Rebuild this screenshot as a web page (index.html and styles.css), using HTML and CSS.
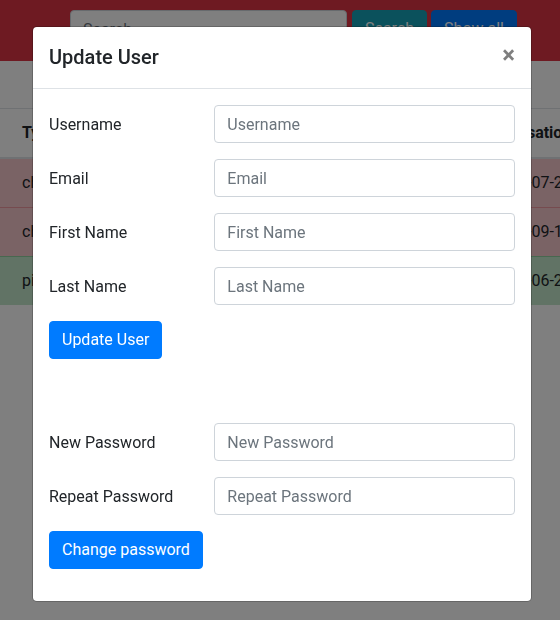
FILE: index.html
```html
<!DOCTYPE html>
<html lang="en">
<head>
<meta charset="utf-8">
<title>Update User</title>
<link rel="stylesheet" href="styles.css">
</head>
<body>
<div class="page">
  <nav class="topbar">
    <form class="search">
      <input class="search-input" type="text" placeholder="Search...">
      <button type="button" class="btn btn-info">Search</button>
      <button type="button" class="btn btn-primary">Show all</button>
    </form>
  </nav>
  <div class="table-wrap">
    <table class="table">
      <thead>
        <tr><th>Type</th><th>Name</th><th>Amount</th><th>Realisation</th></tr>
      </thead>
      <tbody>
        <tr class="row-danger"><td>charge</td><td>Electricity</td><td>-120.00</td><td>2019-07-24</td></tr>
        <tr class="row-danger"><td>charge</td><td>Internet</td><td>-45.00</td><td>2019-09-12</td></tr>
        <tr class="row-success"><td>pie</td><td>Salary</td><td>2400.00</td><td>2019-06-28</td></tr>
      </tbody>
    </table>
  </div>
</div>

<div class="backdrop"></div>

<div class="modal" role="dialog">
  <div class="modal-header">
    <h5 class="modal-title">Update User</h5>
    <button type="button" class="close" aria-label="Close">×</button>
  </div>
  <div class="modal-body">
    <form class="form form-user">
      <div class="form-row">
        <label class="form-label">Username</label>
        <input class="form-control" type="text" placeholder="Username">
      </div>
      <div class="form-row">
        <label class="form-label">Email</label>
        <input class="form-control" type="text" placeholder="Email">
      </div>
      <div class="form-row">
        <label class="form-label">First Name</label>
        <input class="form-control" type="text" placeholder="First Name">
      </div>
      <div class="form-row">
        <label class="form-label">Last Name</label>
        <input class="form-control" type="text" placeholder="Last Name">
      </div>
      <button type="button" class="btn btn-primary">Update User</button>
    </form>
    <div class="spacer"></div>
    <form class="form form-password">
      <div class="form-row">
        <label class="form-label">New Password</label>
        <input class="form-control" type="password" placeholder="New Password">
      </div>
      <div class="form-row">
        <label class="form-label">Repeat Password</label>
        <input class="form-control" type="password" placeholder="Repeat Password">
      </div>
      <button type="button" class="btn btn-primary">Change password</button>
    </form>
  </div>
</div>
</body>
</html>
```

FILE: styles.css
```css
* {
  box-sizing: border-box;
}

html, body {
  margin: 0;
  padding: 0;
}

body {
  font-family: Roboto, "Liberation Sans", Arial, sans-serif;
  font-size: 16px;
  line-height: 1.5;
  color: #212529;
  background: #fff;
  height: 620px;
  overflow: hidden;
}

/* ---------- page behind the modal ---------- */
.topbar {
  background: #dc3545;
  height: 61px;
  display: flex;
  justify-content: flex-end;
  align-items: flex-start;
  padding: 10px 43px 0 0;
}

.search {
  display: flex;
  gap: 4px;
  margin: 0;
}

.search-input {
  width: 277px;
  height: 38px;
  margin-right: 1px;
  padding: 6px 12px;
  font: inherit;
  color: #495057;
  background: #fff;
  border: 1px solid #ced4da;
  border-radius: 4px;
}

.search-input::placeholder {
  color: #6c757d;
}

.btn {
  display: inline-block;
  height: 38px;
  padding: 6px 12px;
  font-family: inherit;
  font-size: 16px;
  line-height: 24px;
  font-weight: 400;
  color: #fff;
  border: 1px solid transparent;
  border-radius: 4px;
  cursor: pointer;
  white-space: nowrap;
}

.btn-primary {
  background: #007bff;
  border-color: #007bff;
}

.btn-info {
  background: #17a2b8;
  border-color: #17a2b8;
}

.table-wrap {
  padding-top: 47px;
  overflow: hidden;
}

.table {
  border-collapse: collapse;
  table-layout: fixed;
  width: 720px;
}

.table th,
.table td {
  padding: 12px;
  border-top: 1px solid #dee2e6;
  text-align: left;
  vertical-align: top;
  white-space: nowrap;
  overflow: hidden;
}

.table th:first-child,
.table td:first-child {
  padding-left: 22px;
}

.table th {
  font-weight: 700;
  border-bottom: 2px solid #dee2e6;
}

.table th:nth-child(1) { width: 170px; }
.table th:nth-child(2) { width: 160px; }
.table th:nth-child(3) { width: 149px; }
.table th:nth-child(4) { width: 241px; }

.row-danger td {
  background: #f5c6cb;
  border-top-color: #ed969e;
}

.row-success td {
  background: #c3e6cb;
  border-top-color: #8fd19e;
}

/* ---------- modal ---------- */
.backdrop {
  position: fixed;
  inset: 0;
  background: rgba(0, 0, 0, 0.5);
}

.modal {
  position: fixed;
  left: 32px;
  top: 26px;
  width: 500px;
  background: #fff;
  background-clip: padding-box;
  border: 1px solid rgba(0, 0, 0, 0.2);
  border-radius: 4.8px;
}

.modal-header {
  display: flex;
  align-items: flex-start;
  justify-content: space-between;
  padding: 16px;
  border-bottom: 1px solid #dee2e6;
}

.modal-title {
  margin: 0;
  font-size: 20px;
  font-weight: 500;
  line-height: 29px;
}

.close {
  margin: -16px -16px -16px auto;
  padding: 16px;
  background: transparent;
  border: 0;
  font-family: inherit;
  font-size: 24px;
  font-weight: 700;
  line-height: 1;
  color: #000;
  opacity: 0.5;
  text-shadow: 0 1px 0 #fff;
  cursor: pointer;
}

.modal-body {
  padding: 16px;
}

.form {
  margin: 0 0 16px;
}

.form-row {
  display: grid;
  grid-template-columns: calc((100% + 30px) / 3 - 30px) 1fr;
  column-gap: 30px;
  margin-bottom: 16px;
}

.form-label {
  padding: 8px 0 6px;
  line-height: 24px;
}

.form-control {
  display: block;
  width: 100%;
  height: 38px;
  padding: 6px 12px;
  font-family: inherit;
  font-size: 16px;
  line-height: 24px;
  color: #495057;
  background: #fff;
  border: 1px solid #ced4da;
  border-radius: 4px;
}

.form-control::placeholder {
  color: #6c757d;
  opacity: 1;
}

.spacer {
  height: 48px;
}
```
